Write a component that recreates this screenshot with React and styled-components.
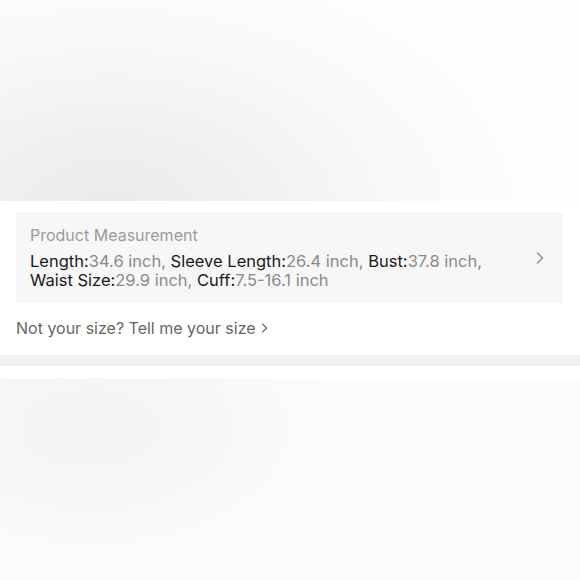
import * as React from "react"
import styled, { createGlobalStyle } from "styled-components"

const GlobalStyle = createGlobalStyle`
  body {
    margin: 0;
    background: #fff;
    font-family: Inter, "Liberation Sans", Arial, sans-serif;
    -webkit-font-smoothing: antialiased;
  }
`

const Page = styled.div`
  width: 580px;
  display: flex;
  flex-direction: column;
`

const BlurPanel = styled.div`
  height: ${props => props.height}px;
  background: ${props => props.bg};
`

const Section = styled.div`
  background: #fff;
  padding: 11px 17px 17px 16px;
`

const Card = styled.div`
  display: flex;
  align-items: center;
  background: #f7f7f7;
  padding: 13px 19px 13px 14px;
`

const CardBody = styled.div`
  flex: 1;
`

const Title = styled.div`
  font-size: 16px;
  line-height: 20px;
  color: #9a9a9a;
  margin-bottom: 7px;
`

const Specs = styled.div`
  font-size: 16.5px;
  line-height: 19px;
  color: #8a8a8a;
  padding-right: 40px;
`

const Label = styled.span`
  color: #1a1a1a;
`

const SizeLink = styled.div`
  display: flex;
  align-items: center;
  gap: 5px;
  margin-top: 15px;
  font-size: 16px;
  line-height: 20px;
  color: #666;
`

const Divider = styled.div`
  height: 11px;
  background: #f0f0f0;
`

const Gap = styled.div`
  height: 12px;
  background: #fff;
`

const Chevron = ({ w, h, color }) => (
  <svg width={w} height={h} viewBox="0 0 8 12" fill="none">
    <path d="M1.5 1 L6.5 6 L1.5 11" stroke={color} strokeWidth="1.5" strokeLinecap="round" strokeLinejoin="round" />
  </svg>
)

const specs = [
  ["Length", "34.6 inch"],
  ["Sleeve Length", "26.4 inch"],
  ["Bust", "37.8 inch"],
  ["Waist Size", "29.9 inch"],
  ["Cuff", "7.5-16.1 inch"],
]

const App = () => {
  return (
    <>
      <GlobalStyle />
      <Page>
        <BlurPanel
          height={201}
          bg="radial-gradient(ellipse 420px 260px at 110px 215px, #eaeaea 0%, #f1f1f1 35%, #f8f8f8 65%, #fdfdfd 100%)"
        />
        <Section>
          <Card>
            <CardBody>
              <Title>Product Measurement</Title>
              <Specs>
                {specs.map(([k, v], i) => (
                  <React.Fragment key={k}>
                    <Label>{k}:</Label>
                    {v}
                    {i < specs.length - 1 ? ", " : ""}
                  </React.Fragment>
                ))}
              </Specs>
            </CardBody>
            <Chevron w={8} h={12} color="#8f8f8f" />
          </Card>
          <SizeLink>
            Not your size? Tell me your size
            <Chevron w={7} h={10} color="#666" />
          </SizeLink>
        </Section>
        <Divider />
        <Gap />
        <BlurPanel
          height={202}
          bg="radial-gradient(ellipse 260px 150px at 90px 50px, #f4f4f4 0%, #f6f6f6 40%, #fafafa 75%, #fcfcfc 100%)"
        />
      </Page>
    </>
  )
}

export default App
